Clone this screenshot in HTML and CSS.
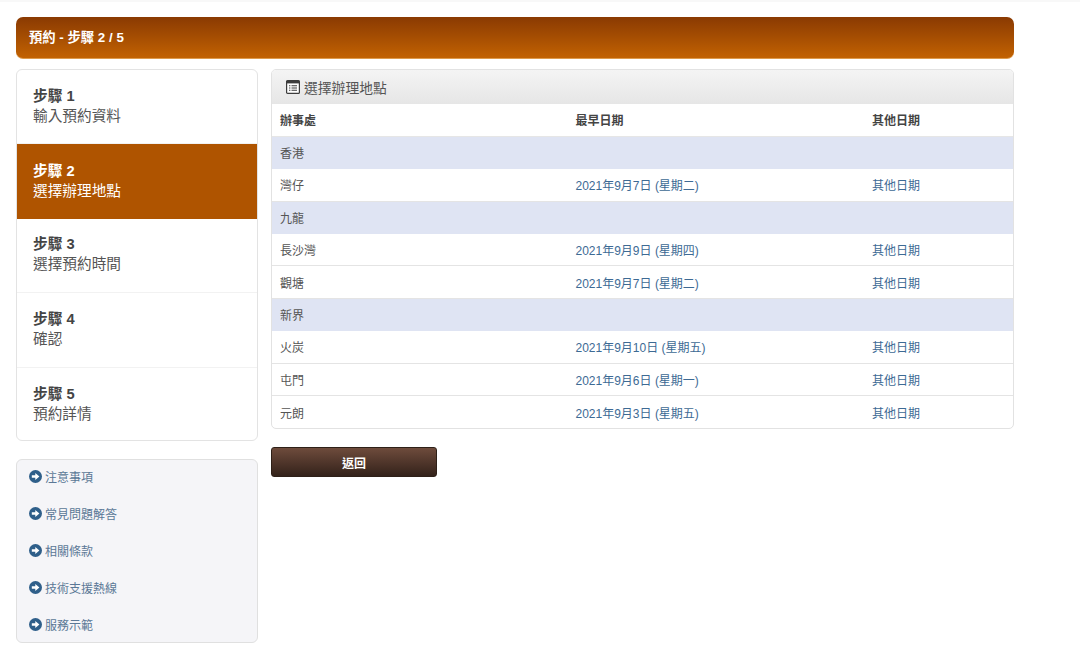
FILE: index.html
```html
<!DOCTYPE html>
<html lang="zh-Hant">
<head>
<meta charset="utf-8">
<title>預約 - 步驟 2 / 5</title>
<link rel="stylesheet" href="styles.css">
</head>
<body>
<svg class="defs" width="0" height="0" aria-hidden="true">
  <symbol id="arrow" viewBox="0 0 12 12">
    <circle cx="6" cy="6" r="6" fill="#2f5f8a"/>
    <path d="M2.6 4.9h3.2V2.8L9.6 6 5.8 9.2V7.1H2.6z" fill="#fff"/>
  </symbol>
</svg>
<div class="page">
  <header class="banner">預約 - 步驟 2 / 5</header>
  <div class="columns">
    <aside class="side">
      <ol class="steps">
        <li class="step"><b>步驟 1</b><span>輸入預約資料</span></li>
        <li class="step active"><b>步驟 2</b><span>選擇辦理地點</span></li>
        <li class="step"><b>步驟 3</b><span>選擇預約時間</span></li>
        <li class="step"><b>步驟 4</b><span>確認</span></li>
        <li class="step"><b>步驟 5</b><span>預約詳情</span></li>
      </ol>
      <ul class="links">
        <li><svg class="ico"><use href="#arrow"/></svg><a>注意事項</a></li>
        <li><svg class="ico"><use href="#arrow"/></svg><a>常見問題解答</a></li>
        <li><svg class="ico"><use href="#arrow"/></svg><a>相關條款</a></li>
        <li><svg class="ico"><use href="#arrow"/></svg><a>技術支援熱線</a></li>
        <li><svg class="ico"><use href="#arrow"/></svg><a>服務示範</a></li>
      </ul>
    </aside>
    <main class="main">
      <section class="panel">
        <h2 class="panel-head">
          <svg class="list-ico" viewBox="0 0 14 14" aria-hidden="true">
            <rect x="0.6" y="0.6" width="12.8" height="12.8" rx="1" fill="#fff" stroke="#3c3c3c" stroke-width="1.2"/>
            <rect x="0.6" y="0.6" width="12.8" height="2.8" fill="#3c3c3c"/>
            <path d="M3 5.7h1.4M5.5 5.7H11M3 8h1.4M5.5 8H11M3 10.3h1.4M5.5 10.3H11" stroke="#3c3c3c" stroke-width="1.1"/>
          </svg>
          選擇辦理地點
        </h2>
        <div class="table">
          <div class="row head"><span>辦事處</span><span>最早日期</span><span>其他日期</span></div>
          <div class="row region"><span>香港</span></div>
          <div class="row"><span>灣仔</span><a>2021年9月7日 (星期二)</a><a>其他日期</a></div>
          <div class="row region"><span>九龍</span></div>
          <div class="row"><span>長沙灣</span><a>2021年9月9日 (星期四)</a><a>其他日期</a></div>
          <div class="row"><span>觀塘</span><a>2021年9月7日 (星期二)</a><a>其他日期</a></div>
          <div class="row region"><span>新界</span></div>
          <div class="row"><span>火炭</span><a>2021年9月10日 (星期五)</a><a>其他日期</a></div>
          <div class="row"><span>屯門</span><a>2021年9月6日 (星期一)</a><a>其他日期</a></div>
          <div class="row"><span>元朗</span><a>2021年9月3日 (星期五)</a><a>其他日期</a></div>
        </div>
      </section>
      <button class="back" type="button">返回</button>
    </main>
  </div>
</div>
</body>
</html>
```
FILE: styles.css
```css
* { box-sizing: border-box; }
html, body { height: 100%; }
body {
  margin: 0;
  background: #fff;
  color: #333;
  font-family: "Liberation Sans", "Noto Sans CJK TC", sans-serif;
  font-size: 12px;
  overflow: hidden;
  border-top: 2px solid #f8f8f8;
}
.defs { position: absolute; }
.page {
  width: 1014px;
  padding: 15px 0 0 16px;
}
.banner {
  height: 42px;
  display: flex;
  align-items: center;
  padding: 0 0 2px 13px;
  border-radius: 7px;
  border-bottom: 1px solid #dd9a4c;
  background: linear-gradient(#8a3a02, #c26202);
  color: #fff;
  font-weight: bold;
  font-size: 13.33px;
}
.columns {
  display: flex;
  gap: 13px;
  margin-top: 10px;
}
.side { width: 242px; flex: none; }
.steps {
  list-style: none;
  margin: 0;
  padding: 0;
  background: #fff;
  border: 1px solid #e3e3e3;
  border-radius: 6px;
  height: 372px;
  overflow: hidden;
}
.step {
  height: 74.4px;
  padding: 0 0 2px 16px;
  display: flex;
  flex-direction: column;
  justify-content: center;
  border-bottom: 1px solid #f2f2f2;
  font-size: 14.67px;
  line-height: 20px;
  color: #555;
}
.step:last-child { border-bottom: 0; }
.step b { color: #444; }
.step.active {
  background: #af5400;
  color: #fff;
  border-bottom: 0;
}
.step.active b { color: #fff; }
.links {
  list-style: none;
  margin: 18px 0 0;
  padding: 0 0 0 12px;
  height: 184px;
  background: #f5f5f8;
  border: 1px solid #e0e0e0;
  border-radius: 6px;
}
.links li {
  display: flex;
  align-items: center;
  gap: 3px;
  height: 36.8px;
  padding-bottom: 3px;
  color: #5b7896;
}
.ico { width: 13px; height: 13px; flex: none; }
.main { width: 743px; flex: none; }
.panel {
  border: 1px solid #e2e2e2;
  border-radius: 5px;
  background: #fff;
  overflow: hidden;
  height: 360px;
}
.panel-head {
  margin: 0;
  height: 34.4px;
  display: flex;
  align-items: center;
  gap: 4px;
  padding-left: 14px;
  background: linear-gradient(#f4f4f4, #e6e6e6);
  font-size: 13.8px;
  font-weight: normal;
  color: #555;
}
.list-ico { width: 14px; height: 14px; flex: none; }
.row {
  display: grid;
  grid-template-columns: 295.5px 296.5px 1fr;
  align-items: center;
  height: 32.4px;
  padding-left: 8px;
  border-bottom: 1px solid #e4e4e4;
  color: #555;
}
.row:last-child { border-bottom: 0; }
.row a { color: #3d6a94; }
.row.head {
  font-weight: bold;
  color: #444;
  padding-bottom: 2px;
  border-bottom: 1px solid #e6e6e6;
}
.row.region { background: #dfe4f3; border-bottom: 0; color: #555; }
.back {
  display: block;
  width: 166px;
  height: 30px;
  margin-top: 18px;
  border: 1px solid #2e2018;
  border-radius: 3px;
  background: linear-gradient(#6e4b3c, #33221a);
  color: #fff;
  font: bold 12px "Liberation Sans", "Noto Sans CJK TC", sans-serif;
}
```
